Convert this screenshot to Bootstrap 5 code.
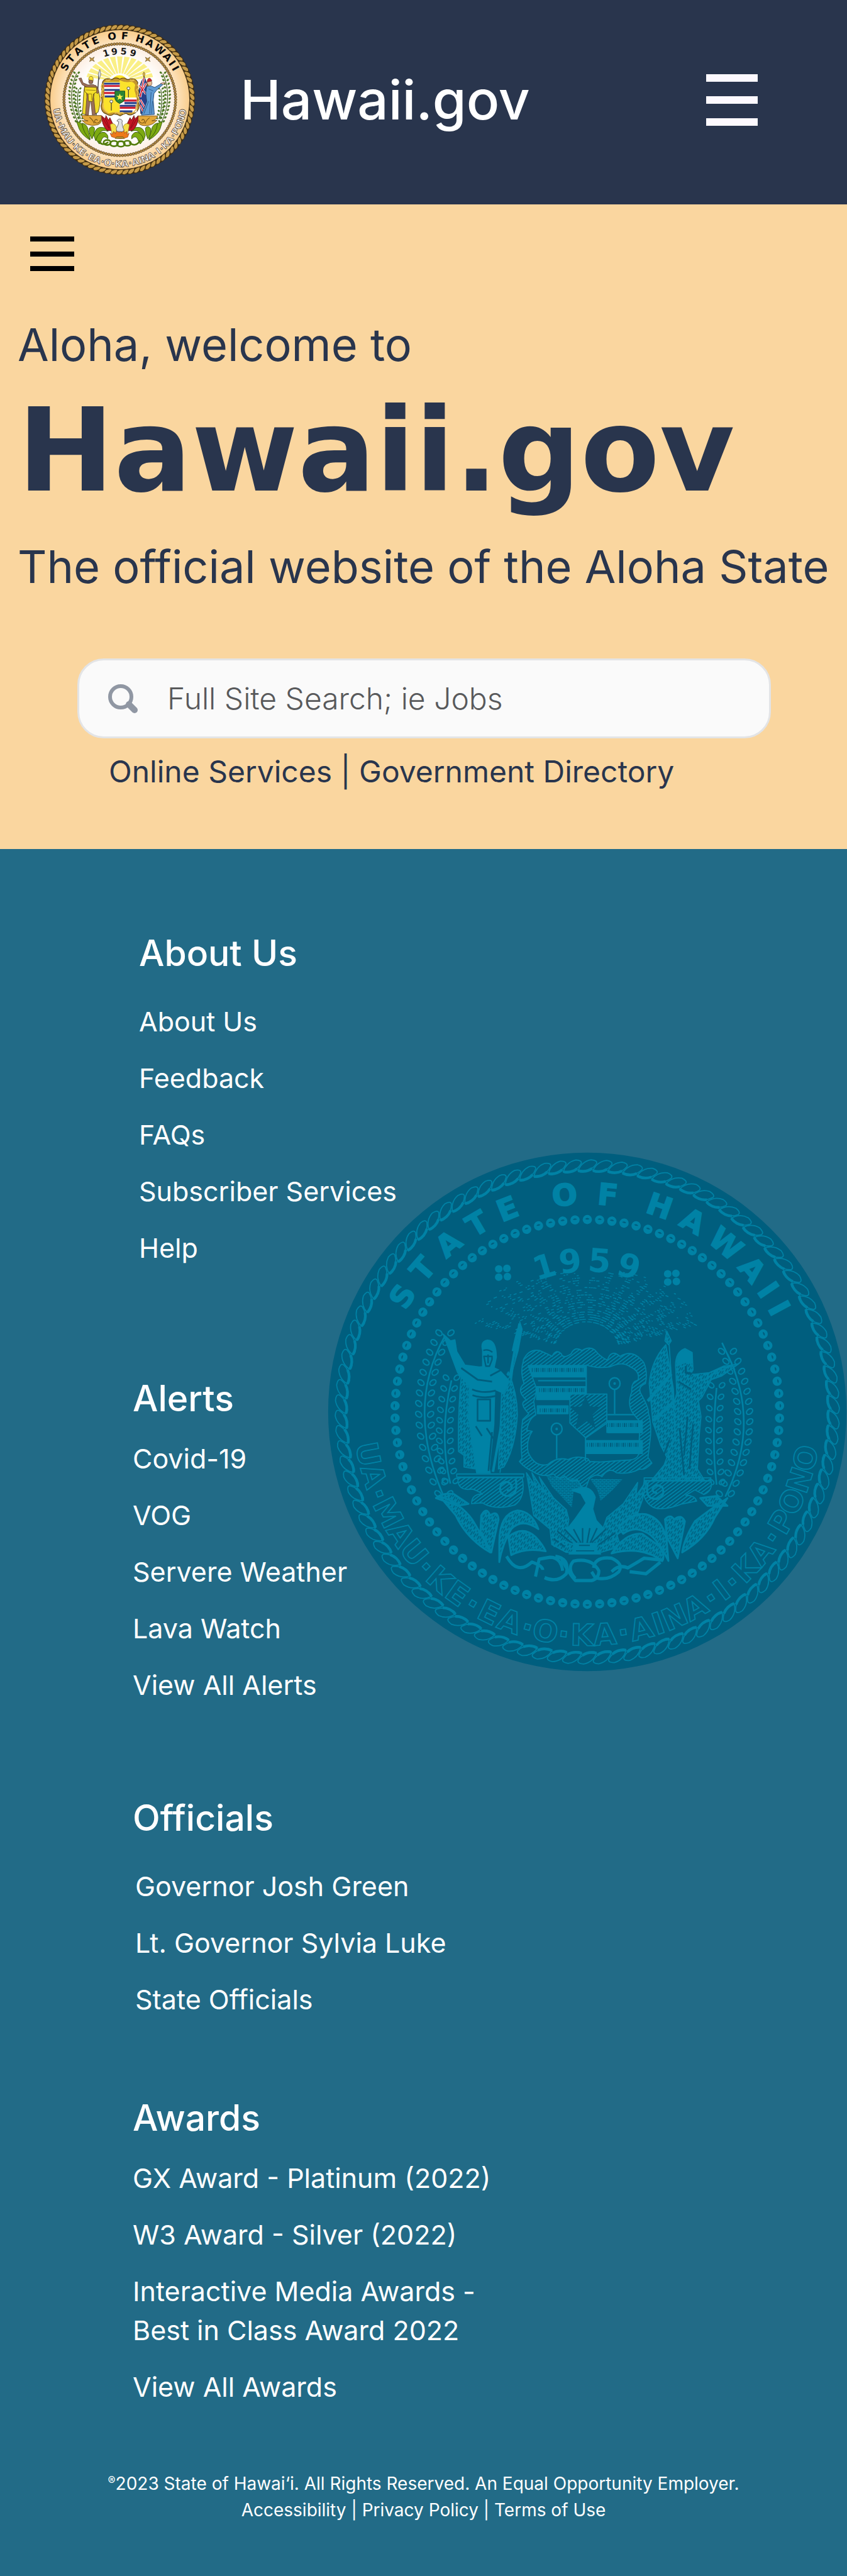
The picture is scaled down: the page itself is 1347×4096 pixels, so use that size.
<!DOCTYPE html>
<html lang="en">
<head>
<meta charset="utf-8">
<meta name="viewport" content="width=device-width, initial-scale=1">
<title>Hawaii.gov</title>
<link href="https://cdn.jsdelivr.net/npm/bootstrap@5.3.0/dist/css/bootstrap.min.css" rel="stylesheet">
<style>
:root{--navy:#29354d;--sand:#fad69f;--teal:#226b87;--deep:#005e7e;--wave:#0082a5}
body{font-family:Inter,"Open Sans",sans-serif;background:var(--teal);color:#fff}
a{color:inherit;text-decoration:none}
a:hover{text-decoration:underline}
.site-head{background:var(--navy);padding:38px 142px 46px 70px}
.seal-logo{width:241px;height:241px;display:block}
.site-name{font-size:87px;font-weight:500;line-height:124px;margin-left:71px}
.burger{display:flex;flex-direction:column;justify-content:space-between;border:0;background:none;padding:0;width:82px;height:82px}
.burger span{display:block;height:12px;background:#fdf9ff}
.burger-dark{width:70px;height:55px;margin-left:20px}
.burger-dark span{height:8px;background:#000}
.hero{background:var(--sand);color:var(--navy);padding:51px 28px 87px}
.hero-line{font-size:72px;line-height:104px;margin:0}
.hero-top{margin-top:65px}
.hero-title{font-family:"DejaVu Sans",sans-serif;font-weight:700;font-size:183px;line-height:200px;margin:17px 0 32px}
.site-search{margin:94px 93px 17px 95px;height:127px;border:3px solid #e3e4e6;border-radius:42px;background:#fafafa;padding:0 40px 0 46px}
.site-search svg{width:48px;height:46px;flex:none}
.site-search .form-control{border:0;background:none;box-shadow:none;padding:0 0 0 46px;font-size:48px;line-height:72px;font-weight:300;color:#58595b}
.site-search .form-control::placeholder{color:#58595b;opacity:1}
.quick{font-size:48px;line-height:72px;margin-left:145px}
.site-foot{position:relative;padding:125px 0 85px}
.seal-mark{position:absolute;right:0;top:482px;width:826px;height:826px}
.foot-col{position:relative;padding-left:211px}
.foot-col h2{font-size:57px;line-height:82px;font-weight:500;margin:0 0 23px}
.foot-col ul{font-size:43px;line-height:62px;gap:28px}
.foot-about{padding-left:221px;margin-bottom:168px}
.foot-alerts{margin-bottom:140px}
.foot-officials{margin-bottom:117px}
.foot-officials ul{padding-left:4px}
.foot-col.roomy h2{margin-bottom:36px}
.legal{position:relative;margin-top:102px;font-size:28px;line-height:42px}
.legal sup{font-size:18px;top:-8px}
</style>
<script src="https://cdn.jsdelivr.net/npm/bootstrap@5.3.0/dist/js/bootstrap.bundle.min.js"></script>
</head>
<body>
<header class="site-head d-flex align-items-center">
  <svg class="seal-logo" viewBox="59 41 842 842" role="img" aria-label="Seal of the State of Hawaii">
    <defs>
      <radialGradient id="gBand"><stop offset=".7" stop-color="#fff0dc"/><stop offset="1" stop-color="#f9cd8c"/></radialGradient>
      <radialGradient id="gCore"><stop offset=".72" stop-color="#fff"/><stop offset="1" stop-color="#fdeee2"/></radialGradient>
    </defs>
    <circle cx="480" cy="462" r="417" fill="#3a2a10"/>
    <g id="logoRope"></g>
    <circle cx="480" cy="462" r="388" fill="url(#gBand)" stroke="#3a2a10" stroke-width="3"/>
    <circle cx="480" cy="462" r="308" fill="url(#gCore)"/>
    <g id="logoBeads"></g>
    <g id="logoText"></g>
    <g fill="#c39a4a" stroke="#5b4213" stroke-width="2"><path d="M312 226l13 7 13-8-6 13 7 12-14-7-13 7 6-12z"/><path d="M622 226l13 7 13-8-6 13 7 12-14-7-13 7 6-12z"/></g>
    <g id="logoRays"></g>
    <path d="M430 362a50 50 0 0 1 97 0z" fill="#fde428" stroke="#fff" stroke-width="4"/>
    <g id="logoSprigs"></g>
    <!-- Kamehameha -->
    <path d="M364 315L349 548" stroke="#444" stroke-width="5"/><path d="M369 294l-9 26 6 30 9-30z" fill="#d8dce2" stroke="#444" stroke-width="2"/>
    <path d="M286 378c-10 50-8 110-14 162l32 10 6-140zM345 382c26 40 34 90 14 150l-22 12-8-130z" fill="#f0dc2a" stroke="#4a3c08" stroke-width="3"/>
    <path d="M252 344l14-3 10 27 28 12 28-3 22 12 10 30-9 10-14-22-6 40 10 98-18 2-10-90-12 92-16-2 8-100-4-56-22-12z" fill="#9a6f58" stroke="#3c2418" stroke-width="2"/>
    <path d="M284 392l66 2 2 24-18 12-6 42-22-2-2-38-18-14z" fill="#f5df2b" stroke="#6a5608" stroke-width="3"/>
    <path d="M292 408l54 2M302 430h22v34" stroke="#8a7410" stroke-width="3" fill="none"/>
    <circle cx="319" cy="362" r="12" fill="#9a6f58" stroke="#3c2418" stroke-width="2"/><path d="M307 352c-1-24 22-26 25-8v14l-8-4z" fill="#fbe337" stroke="#4a3c08" stroke-width="2"/>
    <!-- Liberty -->
    <path d="M614 312l2 232" stroke="#7a5a20" stroke-width="4"/><path d="M614 308l7 12-7 16-6-16z" fill="#e0b84a" stroke="#5b4213" stroke-width="2"/>
    <path d="M616 334c-24 30-34 80-28 116l8 90 44 4-12-90 2-86z" fill="#27408b" stroke="#222" stroke-width="2"/>
    <path d="M614 340l-20 108M588 382l38 50M590 440l36-70M594 462l40 70M592 492l24 48" stroke="#fff" stroke-width="11"/>
    <path d="M614 340l-20 108M588 382l38 50M590 440l36-70M594 462l40 70M592 492l24 48" stroke="#d01f32" stroke-width="5"/>
    <path d="M630 388l24-2 20 8 42-24 6 6-38 34-14 18-4 36 6 80-72 4 30-76-6-48z" fill="#5f9bd4" stroke="#1d3e68" stroke-width="3"/>
    <path d="M654 420l-8 120M640 470l-26 70M662 470l-6 70M640 402l26 12" stroke="#24507f" stroke-width="3"/>
    <path d="M706 372l16-6 12 2-14 9z" fill="#edc6a0" stroke="#533" stroke-width="2"/>
    <circle cx="645" cy="370" r="14" fill="#e6bd95" stroke="#532" stroke-width="2"/><path d="M632 364c0-28 22-26 26-6z" fill="#c8242b" stroke="#511" stroke-width="2"/><path d="M634 370q-6 10-2 20l8-6z" fill="#76511f"/>
    <!-- Shield -->
    <path d="M386 360q14-18 36-14 14 8 24-2 16-8 34 4 18-12 34-2 12 8 24 0 28-6 42 20-4 22 2 36 8 30-2 48 2 26 8 46-4 36-38 48-18 8-34-6-14 2-34 14-18-12-36-10-18 16-40 0-30-8-30-46 8-22 4-40-6-22 0-42-2-30 6-54z" fill="#c4962f" stroke="#5b4213" stroke-width="4"/>
    <path d="M396 362h82v-8q30 14 60 8 20 0 28 18-8 26 0 44 8 24 0 46l6 16q-4 36-30 44-36 4-62 4-36-6-62 4-22-4-28-36-2-40 2-60 6-26 0-40z" fill="#fbe22c"/>
    <path d="M392 366h88v84h-84z" fill="#fff"/><path d="M480 450h94v82h-94z" fill="#fff"/>
    <g stroke-width="11"><path d="M392 373h88M480 496h94" stroke="#27408b"/><path d="M392 386h88M392 425h88M480 467h94M480 507h88" stroke="#d01f32"/><path d="M394 408h86M396 444h60M506 481h68M480 527h70" stroke="#27408b"/></g>
    <path d="M528 404v46M433 478v44" stroke="#333" stroke-width="4"/><g fill="#fff" stroke="#333" stroke-width="3"><circle cx="528" cy="399" r="8"/><circle cx="433" cy="472" r="8"/></g>
    <path d="M453 414h55v44q-4 16-28 26-23-10-27-26z" fill="#2a8435" stroke="#174a1e" stroke-width="3"/><path d="M480 428l5 13h14l-11 9 4 14-12-8-12 8 4-14-11-9h14z" fill="#fff04a"/>
    <path d="M384 372q-14 20 2 32-14 16-2 34-20 10-8 34M388 480q-8 36 26 54M576 378q14 18-2 30 16 14 2 34 18 14 4 36M570 490q8 34-22 46M402 350q10 14 26 0M536 350q8 14 24 2M452 540q10-16 24 0 16-14 28 0" fill="none" stroke="#e9bf57" stroke-width="6"/>
    <!-- Pedestals -->
    <g fill="#e3a83a" stroke="#6a480e" stroke-width="3"><path d="M268 550h110v14q4 30-22 38-30 8-62-4l-24-20 34 2q-30-4-36-30z"/><path d="M690 552H580v14q-4 30 22 38 30 8 62-8l24-20-30 4q28-6 32-28z"/></g>
    <g fill="none" stroke="#7b5512" stroke-width="4"><path d="M372 574q-4 20-22 18-14-4-8-17 10-8 14 3M312 560q20 16 26 34M586 574q4 20 22 18 14-4 8-17-10-8-14 3M646 562q-20 14-26 34"/></g>
    <!-- Leaves -->
    <g fill="#7daa12" stroke="#2f5207" stroke-width="3">
      <path d="M240 584q36 4 44 44l30 58q-46-28-60-62zM716 584q-34 4-42 44l-32 58q48-28 62-62z"/>
      <path d="M270 592q30 6 34 40l12 50q-40-34-46-90zM690 592q-30 6-34 40l-14 50q42-34 48-90z"/>
      <path d="M310 622q20-22 30 0 0 30-14 58-18-24-16-58zM652 622q-20-22-30 0 0 30 14 58 18-24 16-58z"/>
      <path d="M336 660q10-50 46-44 24 2 34 22-36-14-48 12-8 24-22 40zM622 660q-10-50-46-44-24 2-34 22 36-14 48 12 8 24 22 40z"/>
      <path d="M348 684q14-48 48-40 22 12 18 36-22-24-34 2-4 16-14 26zM612 684q-14-48-48-40-22 12-18 36 22-24 34 2 4 16 14 26z"/>
    </g>
    <g fill="none" stroke="#517c0b" stroke-width="9"><path d="M362 690q20 34 54 8"/><ellipse cx="410" cy="700" rx="20" ry="14"/><ellipse cx="448" cy="706" rx="22" ry="15"/><ellipse cx="486" cy="708" rx="22" ry="15"/><ellipse cx="522" cy="704" rx="20" ry="14"/><path d="M532 700q36 30 62-12"/></g>
    <!-- Phoenix -->
    <g stroke="#5c0d0d" stroke-width="3" fill="#c41624"><path d="M380 552l20 18 3-20 14 26 8-14 16 34-8 38-24-2q-30-30-29-80zM582 552l-20 18-3-20-14 26-8-14-16 34 8 38 24-2q30-30 29-80z"/></g>
    <path d="M384 562l36 60M398 560l26 62M578 562l-36 60M564 560l-26 62" stroke="#7c0c14" stroke-width="3"/>
    <g fill="#f5df49" stroke="#7a6410" stroke-width="2"><path d="M426 600q22-14 34 10l10 34-34 6zM534 600q-22-14-34 10l-10 34 34 6z"/></g>
    <path d="M434 668l-8-20 14 6 6-16 10 12 8-22 12 18 6-16 8 14 12-16 4 20 12-10 2 18 12-8-8 22q-38 18-90-2z" fill="#ee7a1a" stroke="#8a2c08" stroke-width="2"/>
    <path d="M464 580q8-16 24-8 10 6 4 18l4 22 8 20-10 8-30-2-4-14 12-26 2-14z" fill="#dfe1e4" stroke="#555" stroke-width="3"/><path d="M462 668h36l8 10h-52z" fill="#b8902e" stroke="#5b4213" stroke-width="2"/>
  </svg>
  <a class="site-name" href="#">Hawaii.gov</a>
  <button class="burger ms-auto" type="button" aria-label="Open menu"><span></span><span></span><span></span></button>
</header>

<main class="hero">
  <button class="burger burger-dark" type="button" aria-label="Open page menu"><span></span><span></span><span></span></button>
  <p class="hero-line hero-top">Aloha, welcome to</p>
  <h1 class="hero-title">Hawaii.gov</h1>
  <p class="hero-line">The official website of the Aloha State</p>
  <form class="site-search d-flex align-items-center" role="search">
    <svg viewBox="0 0 48 46" aria-hidden="true"><circle cx="20" cy="20" r="17" fill="none" stroke="#9097a3" stroke-width="6"/><path d="M33 32l9 9" stroke="#9097a3" stroke-width="10" stroke-linecap="round"/></svg>
    <label class="visually-hidden" for="q">Full site search</label>
    <input class="form-control" id="q" type="search" placeholder="Full Site Search; ie Jobs">
  </form>
  <nav class="quick" aria-label="Quick links"><a href="#">Online Services</a> | <a href="#">Government Directory</a></nav>
</main>

<footer class="site-foot">
  <svg class="seal-mark" viewBox="0 0 956 956" aria-hidden="true">
    <circle cx="478" cy="478" r="477" fill="#005e7e"/>
    <g id="markRope"></g><g id="markBeads"></g><g id="markText"></g><g id="markRays" stroke="#0082a5"></g><g id="markSprigs"></g>
    <g fill="#0082a5"><g id="bloom"><circle cx="315" cy="215" r="7"/><circle cx="330" cy="214" r="7"/><circle cx="315" cy="230" r="7"/><circle cx="331" cy="229" r="7"/></g><use href="#bloom" x="311" y="9"/></g>
    <defs>
      <pattern id="hatch" width="15" height="15" patternUnits="userSpaceOnUse" patternTransform="rotate(-35)"><rect width="15" height="15" fill="#005e7e"/><rect width="15" height="6" fill="#0082a5"/></pattern>
      <pattern id="weave" width="34" height="22" patternUnits="userSpaceOnUse" patternTransform="rotate(-58)"><rect width="34" height="22" fill="#0082a5"/><path d="M2 5h22M14 15h18" stroke="#005e7e" stroke-width="5"/></pattern>
      <pattern id="brick" width="22" height="18" patternUnits="userSpaceOnUse"><path d="M0 3h22M0 12h22M6 3v9M17 12v9" stroke="#0082a5" stroke-width="4"/></pattern>
    </defs>
    <g transform="translate(236 258) scale(.3333 .3571)" stroke="#0082a5" stroke-width="6" stroke-linejoin="round" fill="none">
      <!-- Kamehameha -->
      <path d="M352 150l14 40-12 60-10 50-40 130-60 500M340 190l-16 60-12 50h20l14-60z" fill="#0082a5"/>
      <path d="M352 160L205 925" stroke-width="14"/>
      <path d="M30 430q-20 200-15 390l30 20v60l60 10 20-380zM290 410q50 110 50 220-10 170-75 270l-30 10 20-440z" fill="url(#weave)"/>
      <path d="M-70 215l40 35 25-5 10 60 45 70 80 10 60-5 70 30 35 50-30 60-50-20-5 180-25 230 5 20H115l-5-26-40-260 5-160-65-70-40-100z" fill="#0082a5"/>
      <path d="M120 552h70v110h-70zM90 500q60 24 130 6M92 530q60 20 130 4M30 390l90 60 80 10M190 430l60-30 40 40M110 690l34 50M170 700l50 70M200 720l-20 200" stroke="#005e7e" stroke-width="9"/>
      <path d="M148 300v90q35 36 62 4l14-60q-2-90-50-88-40 6-26 54z" fill="#0082a5"/><path d="M152 300q24-10 50 8M155 330h45v16l-14 34h-20zM178 320v46" stroke="#005e7e" stroke-width="8"/>
      <!-- Liberty -->
      <path d="M1165 200l25 50-15 20-20-20zM1178 270l50 660M1160 270q-80 80-92 200l20 200 44 120 50 90 30-140-10-240z" fill="url(#weave)"/>
      <path d="M1060 560l130-140M1090 660l130-110" stroke-width="16"/>
      <path d="M1215 400q-10-90 50-110l40 20 5 90-14 22h24l80-8 80-34 80-10-90 60-60 20-50 90-20 20 14 80-10 100-10 170 40 60H1080l70-80 60-150-8-160 18-60z" fill="url(#weave)"/>
      <path d="M1220 380q0-80 50-84l34 16v50h-40z" fill="#0082a5"/><path d="M1270 380v34l34 6" stroke="#005e7e" stroke-width="12"/>
      <path d="M1236 700l24 240M1280 640l-20 200M1310 680l-20 230M1180 760l-60 150M1230 460l70 40" stroke="#005e7e" stroke-width="9"/>
      <path d="M1380 450l70-52 28-14 20 4 26-14M1470 260l70 140" stroke-width="9"/>
      <!-- Shield -->
      <path d="M372 350q30-60 90-50 50 20 70 30 20-40 50-14 10 30 55 0 20-40 60-16 40-24 70-4 30 36 70 54 20-60 70-20 70-40 130 30 24 50 10 110-50 20-20 60 40 70 36 90 20 60 10 140l-12 90 22 30q-40 40-66 30-60 30-130 20-40-34-80 20-30-20-70 10l-26 66-40-60q-40 20-70-20-30 30-60-10-60 20-110-10-50-20-80-54l14-16q-10-110 4-200l34-30q-60-60-12-70-60-50-14-86-24-60-3-120z" fill="url(#hatch)"/>
      <path d="M400 378h320v-4q60 20 130 10 70-30 110-2 60 24 46 70-40 10-34 60-30 70 10 116l36 40-8 140q10 50-50 56l-70 4-90 6-60-2-10-14q-60-20-110 4-60-16-110 24-70 20-110-60-14-60 22-110l-30-5q10-60 50-80l-12-70q24-60 6-90z" fill="#005e7e"/>
      <path d="M400 378h320v58H424zM446 486h274v66H446zM450 585h170v40H450zM834 662h196v60H834zM720 764h310v66H720z" fill="#0082a5"/>
      <path d="M420 400h290M460 504h254M464 608h150M836 684h170M724 786h290" stroke="#005e7e" stroke-width="20" stroke-dasharray="4 9 3 6 8 5"/>
      <path d="M454 455h262M460 548h170M838 722h190M722 830h280M838 630h150" stroke-width="7"/><path d="M720 375v150M716 750v120" stroke-width="7"/>
      <path d="M630 524h204v150l-116 76-88-76z" fill="url(#hatch)"/><path d="M717 535l24 54h62l-48 42 16 70-54-42-56 42 16-70-46-42h62z" fill="#005e7e" stroke="none"/>
      <g stroke-width="8"><circle cx="877" cy="470" r="30"/><path d="M877 500v126"/><circle cx="557" cy="704" r="30"/><path d="M557 734v124"/></g><circle cx="877" cy="470" r="4"/><circle cx="557" cy="704" r="4"/>
      <!-- Pedestals -->
      <path d="M5 936h370v16H5zM1040 956h368v14h-368z"/>
      <path d="M12 955h355q20 100-40 140-110 30-180-10l-60 4q0-50 60-50-50-30-70-24-70 6-65-60zM1410 972h-370q-20 100 50 136 60 20 160-18l80-14q-10-30-60-30l50-28 50 24q50-20 40-70z" fill="url(#hatch)"/>
      <path d="M330 960q20 90-50 90-50-14-30-60 40-30 60 10-4 26-28 20M1060 980q-20 90 50 84 50-14 30-60-40-24-54 10 4 24 26 18" stroke-width="11"/>
      <!-- Phoenix and rocks -->
      <path d="M500 945l170 14 30 50-50 20-10 80-60-60-50-50zM740 960l180 4-60 60-60 50-20-60z" fill="url(#brick)" stroke="none"/>
      <path d="M390 930l50 70-20-70 70 100-30-80 80 110 70 60 14 50-10 60 40 60 30-60 60-40 60 50 30-80 90-70 80-110-10 70 60-80-24 100-30 80-50 60-60 40 20 60-110 30H610l-80-40-10-80-90-70z" fill="url(#weave)"/>
      <path d="M640 1020l50-14q60-6 80 50l-14 60 20 60 40 40-60 70H660l-50-60 50-60 60-80-30-50z" fill="#0082a5"/>
      <path d="M540 1270l60 40M560 1230l90 70M600 1220l70 70M650 1220l40 70M700 1215v80M740 1215l-16 80M780 1215l-40 80M830 1220l-80 70M880 1240l-90 60" stroke="#005e7e" stroke-width="8"/>
      <path d="M540 1310l50-30 60 20M800 1310l90-40" stroke-width="8"/>
      <path d="M650 1294h134l-14 34 30 20H625l30-20z" fill="#0082a5"/><path d="M680 1304h60M664 1332h100" stroke="#005e7e"/>
      <!-- Foliage -->
      <g fill="url(#weave)" stroke-width="10">
        <path d="M-90 1050q120 40 180 120 60 90 100 170-130-70-190-190zM-110 1060q40-30 100-20l80 50-60 10zM140 1150q30-50 50 0 40-30 46 20l-40 170-60-110zM240 1290q0-150 100-166 80 4 116 96-90-60-150 0-50 80-66 170zM290 1260q80-60 150 0 40 40 56 74-110-20-190 20z"/>
        <path d="M1500 1060q-100 60-180 120-60 90-70 160 130-70 180-180zM1500 1100l-60-50-90 10 40 40zM1155 1170q30-30 50 0 40-30 60 10l-40 190-60-110zM900 1210q80-80 150-66 90 20 114 130l10 110q-70-130-130-150-60-30-120 10zM860 1345q80-110 170-100l90 60q40 50 20 80-110-80-280-40z"/>
      </g>
      <path d="M280 1360q60 100 140 30 60 20 60 40M440 1465l20-90 60-10q60 0 70 70M490 1470q70 30 120-20 20-80-60-90M580 1365q40 80 80 120h90q40-10 40-50-40-70-140-50-40 40 10 90M760 1420q10-60 100-50 70 30 40 70-60 50-130 30l-20-30M860 1440q40-40 90-20l90-50 100 10M960 1440l90 10 80-60" stroke-width="17"/>
    </g>
  </svg>

  <section class="foot-col foot-about roomy">
    <h2>About Us</h2>
    <ul class="list-unstyled d-flex flex-column mb-0">
      <li><a href="#">About Us</a></li><li><a href="#">Feedback</a></li><li><a href="#">FAQs</a></li><li><a href="#">Subscriber Services</a></li><li><a href="#">Help</a></li>
    </ul>
  </section>
  <section class="foot-col foot-alerts">
    <h2>Alerts</h2>
    <ul class="list-unstyled d-flex flex-column mb-0">
      <li><a href="#">Covid-19</a></li><li><a href="#">VOG</a></li><li><a href="#">Servere Weather</a></li><li><a href="#">Lava Watch</a></li><li><a href="#">View All Alerts</a></li>
    </ul>
  </section>
  <section class="foot-col foot-officials roomy">
    <h2>Officials</h2>
    <ul class="list-unstyled d-flex flex-column mb-0">
      <li><a href="#">Governor Josh Green</a></li><li><a href="#">Lt. Governor Sylvia Luke</a></li><li><a href="#">State Officials</a></li>
    </ul>
  </section>
  <section class="foot-col">
    <h2>Awards</h2>
    <ul class="list-unstyled d-flex flex-column mb-0">
      <li><a href="#">GX Award - Platinum (2022)</a></li><li><a href="#">W3 Award - Silver (2022)</a></li><li><a href="#">Interactive Media Awards -<br>Best in Class Award 2022</a></li><li><a href="#">View All Awards</a></li>
    </ul>
  </section>
  <div class="legal text-center">
    <div><sup>®</sup>2023 State of Hawai‘i. All Rights Reserved. An Equal Opportunity Employer.</div>
    <div><a href="#">Accessibility</a> | <a href="#">Privacy Policy</a> | <a href="#">Terms of Use</a></div>
  </div>
</footer>

<script>
// Rings, lettering, rays and sprigs of the two seals
const put = (id, s) => { document.getElementById(id).innerHTML = s; };
const ring = (n, cx, cy, r, shape) => Array.from({length: n}, (_, i) =>
  `<g transform="rotate(${i * 360 / n} ${cx} ${cy}) translate(${cx} ${cy - r})">${shape}</g>`).join('');
const glyph = (c, a, cx, cy, r, size, attrs, low) =>
  `<text transform="rotate(${low ? -a : a} ${cx} ${cy})" x="${cx}" y="${low ? cy + r : cy - r}" font-size="${size}" text-anchor="middle" font-family="DejaVu Sans, sans-serif" font-weight="700" ${attrs}>${c}</text>`;
const topAngles = [-59, -50, -40.5, -31.3, -22.5, -7, 4.4, 18.4, 28, 38.5, 48.2, 55, 60.6];
const state = (cx, cy, r, size, attrs, turn) => [...'STATEOFHAWAII'].map((c, i) => glyph(c, topAngles[i] + turn, cx, cy, r, size, attrs)).join('');
const year = (cx, cy, r, size, attrs) => [...'1959'].map((c, i) => glyph(c, [-16.5, -6.5, 4.6, 16][i], cx, cy, r, size, attrs)).join('');
const motto = (cx, cy, r, size, attrs) => {
  const t = [...'UA·MAU·KE·EA·O·KA·AINA·I·KA·PONO'], w = t.map(c => c === '·' ? .62 : c === 'I' ? .55 : c === 'M' ? 1.2 : 1);
  const sum = w.reduce((a, b) => a + b); let at = 0;
  return t.map((c, i) => { at += w[i]; return glyph(c, -82 + 163 * (at - w[i] / 2) / sum, cx, cy, r, size, attrs, true); }).join('');
};
const sprig = (x0, y0, cx, cy, x1, y1, n, s, leaf, stem) => {
  let out = `<path d="M${x0} ${y0}Q${cx} ${cy} ${x1} ${y1}" fill="none" ${stem}/>`;
  for (let i = 0; i <= n; i++) {
    const t = i / n, u = 1 - t, x = u*u*x0 + 2*u*t*cx + t*t*x1, y = u*u*y0 + 2*u*t*cy + t*t*y1;
    for (const d of [-1, 1]) out += `<ellipse cx="${x + d * s}" cy="${y - s * .5}" rx="${s * .58}" ry="${s * .4}" transform="rotate(${-d * 40} ${x + d * s} ${y - s * .5})" ${leaf}/>`;
  }
  return out;
};
put('logoRope', ring(78, 480, 462, 403, '<path d="M-20 12Q-14-10 8-14 22-12 20-4 14 10-6 14-16 16-20 12Z" fill="#c59a48" stroke="#3a2a10" stroke-width="3"/>'));
put('logoBeads', ring(128, 480, 462, 310, '<circle r="7" fill="#b98f48" stroke="#4b3512" stroke-width="2.5"/>'));
put('logoText', state(480, 462, 336, 56, 'fill="#0b0b0b"', 0) + year(480, 462, 252, 50, 'fill="#1a1a1a"') +
  motto(480, 462, 374, 50, 'fill="#fff" stroke="#5d4d3d" stroke-width="3"'));
let rays = '';
for (let a = -75; a <= 75; a += 12.5) { const p = (d, r) => `${480 + r * Math.sin(d * Math.PI / 180)} ${362 - r * .75 * Math.cos(d * Math.PI / 180)}`;
  rays += `<path d="M${p(a - 4.6, 62)}L${p(a - 4.6, 188)}L${p(a + 4.6, 188)}L${p(a + 4.6, 62)}Z" fill="#faef86"/>`; }
put('logoRays', rays);
const lg = 'fill="#4e7d1f" stroke="#2c4d10" stroke-width="1"', ls = 'stroke="#3c5c1c" stroke-width="4"';
put('logoSprigs', sprig(248,588,180,450,240,318,13,12,lg,ls) + sprig(262,570,236,490,250,405,8,11,lg,ls) + sprig(712,588,776,450,720,318,13,12,lg,ls) + sprig(698,570,722,490,708,405,8,11,lg,ls));

const W = '#0082a5';
put('markRope', ring(102, 478, 478, 453, `<path d="M-17 9Q-10-8 7-11 19-10 17-4 9 8-6 11-15 13-17 9Z" fill="none" stroke="${W}" stroke-width="2"/><path d="M-17 9Q-3 13 9 5" fill="none" stroke="${W}" stroke-width="5"/>`));
put('markBeads', ring(98, 478, 478, 354, `<circle r="8.5" fill="${W}"/><path d="M-4-1Q0-5 4-1 0 1-4-1Z" fill="#005e7e"/>`));
put('markText', state(478, 478, 382, 55, `fill="${W}" stroke="${W}" stroke-width="2"`, 1) + year(478, 478, 258, 60, `fill="${W}"`) + motto(478, 478, 430, 55, `fill="none" stroke="${W}" stroke-width="2"`));
let dots = '', seed = 7; const rnd = () => (seed = (seed * 16807) % 2147483647) / 2147483647;
for (let a = -74; a <= 74; a += 1.7) { const dense = Math.abs(((a + 100) % 11) - 5.5) < 3.6;
  for (let r = 62; r < 155 + 60 * Math.abs(Math.sin(a * Math.PI / 180)); r += 5) {
    if (rnd() > (dense ? .8 : .12) * (1.1 - r / 300)) continue;
    const q = a * Math.PI / 180, x = 475 + r * Math.sin(q), y = 368 - r * .9 * Math.cos(q), l = 2 + rnd() * 4;
    dots += `M${x.toFixed(1)} ${y.toFixed(1)}l${l.toFixed(1)} ${(l * Math.sin(q) * .5).toFixed(1)}`; } }
put('markRays', `<path d="${dots}" stroke-width="1.6"/>`);
const ml = `fill="none" stroke="${W}" stroke-width="2.5"`, ms = `stroke="${W}" stroke-width="3"`;
put('markSprigs', sprig(214,634,142,470,216,338,15,11,ml,ms) + sprig(226,610,204,520,228,420,10,10,ml,ms) + sprig(732,634,798,500,736,372,14,11,ml,ms) + sprig(716,612,706,530,716,434,9,10,ml,ms));
</script>
</body>
</html>
